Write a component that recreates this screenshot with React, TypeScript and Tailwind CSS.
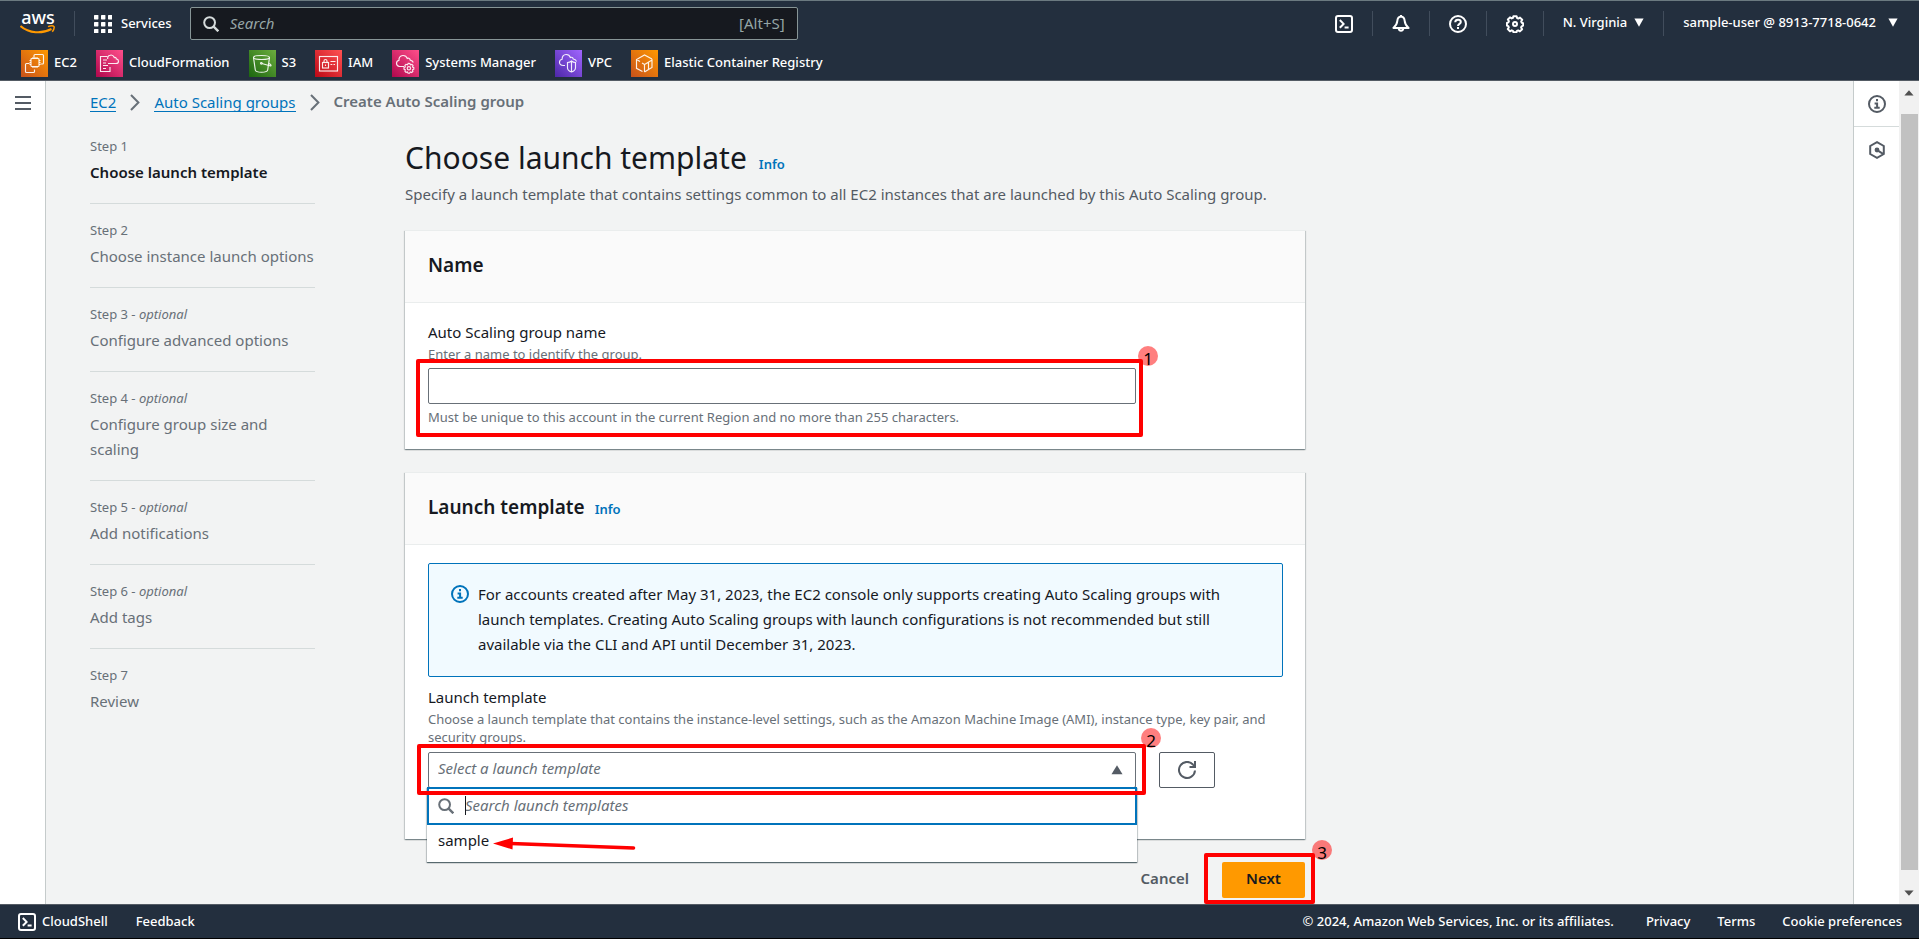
import React from "react";

type IconProps = { className?: string };

function SearchIcon({ className }: IconProps) {
  return (
    <svg viewBox="0 0 16 16" className={className} fill="none" stroke="currentColor" strokeWidth="2" aria-hidden="true">
      <circle cx="6.6" cy="6.6" r="5.4" />
      <path d="M10.4 10.4 15.3 15.3" strokeWidth="2.4" />
    </svg>
  );
}

function GridIcon() {
  const cells = [0, 7, 14];
  return (
    <svg viewBox="0 0 18 18" className="size-[18px]" fill="white" aria-hidden="true">
      {cells.map((y) => cells.map((x) => <rect key={`${x}-${y}`} x={x} y={y} width="4.4" height="4.4" rx="0.6" />))}
    </svg>
  );
}

function ShellIcon({ className }: IconProps) {
  return (
    <svg viewBox="0 0 18 18" className={className} fill="none" stroke="currentColor" strokeWidth="2" aria-hidden="true">
      <rect x="1" y="1" width="16" height="16" rx="2" />
      <path d="M4.8 5 8.6 8.900 4.8 12.800M9.600 12.600h4" />
    </svg>
  );
}

function BellIcon() {
  return (
    <svg viewBox="0 0 18 18" className="size-[18px]" fill="none" stroke="currentColor" strokeWidth="2" strokeLinejoin="round" aria-hidden="true">
      <path d="M9 1.600C6.700 1.900 5.500 3.600 5.300 6 5.100 9 3.800 10.900 1.400 12.900h15.200C14.200 10.900 12.900 9 12.700 6 12.500 3.600 11.300 1.900 9 1.600Z" />
      <path d="M6.600 13.200a2.500 3.400 0 0 0 4.800 0" />
      <path d="M9 0v2" />
    </svg>
  );
}

function HelpIcon() {
  return (
    <svg viewBox="0 0 18 18" className="size-[18px]" fill="none" stroke="currentColor" strokeWidth="2" aria-hidden="true">
      <circle cx="9" cy="9" r="8" />
      <path d="M6.200 7.200C6.300 5.500 7.500 4.700 9 4.700s2.800.9 2.800 2.300c0 1.900-2.800 1.900-2.800 4" />
      <path d="M9 12v2" />
    </svg>
  );
}

function GearIcon() {
  return (
    <svg viewBox="0 0 18 18" className="size-[18px]" fill="none" stroke="currentColor" strokeWidth="2" strokeLinejoin="round" aria-hidden="true">
      <path d="M7.400 1.200h3.200l.5 1.900 1.200.5 1.700-1 2.200 2.200-1 1.700.5 1.200 1.400.5v2.400l-1.500.7-.5 1.200 1 1.700-2.200 2.200-1.700-1-1.200.5-.5 1.300H7.400l-.5-1.400-1.200-.5-1.700 1-2.200-2.200 1-1.700-.5-1.200-1.400-.6V8l1.500-.6.5-1.200-1-1.700L4 2.400l1.700 1 1.200-.5Z" />
      <circle cx="9" cy="9" r="2" />
    </svg>
  );
}

function InfoIcon({ className }: IconProps) {
  return (
    <svg viewBox="0 0 18 18" className={className} fill="none" stroke="currentColor" strokeWidth="2" aria-hidden="true">
      <circle cx="9" cy="9" r="8" />
      <path d="M9 4v2.200M6.600 8.400h2.500v4.200M6.300 12.800h5.400" />
    </svg>
  );
}

function HexIcon() {
  return (
    <svg viewBox="0 0 18 18" className="size-[18px]" fill="none" stroke="currentColor" strokeWidth="2" aria-hidden="true">
      <path d="M9 1.200 15.800 5v8L9 16.800 2.200 13V5Z" />
      <circle cx="9" cy="9" r="2.400" fill="currentColor" stroke="none" />
      <path d="m9.500 9.400 5.600 3.400" />
    </svg>
  );
}

function RefreshIcon() {
  return (
    <svg viewBox="0 0 18 18" className="size-[18px]" fill="none" stroke="currentColor" strokeWidth="2" aria-hidden="true">
      <path d="M17 9.500A8 8 0 1 1 15 3.600L16.400 5" />
      <path d="M17 0v6h-5.500" />
    </svg>
  );
}

function Chevron() {
  return (
    <svg viewBox="0 0 10 17" className="h-[17px] w-[10px] text-[#687078]" fill="none" stroke="currentColor" strokeWidth="2" aria-hidden="true">
      <path d="m1 1 7.400 7.500L1 16" />
    </svg>
  );
}

function Caret({ className }: IconProps) {
  return (
    <svg viewBox="0 0 10 9" className={className} fill="currentColor" preserveAspectRatio="none" aria-hidden="true">
      <path d="M0.400 0.600h9.200L5 8.800Z" />
    </svg>
  );
}

const glyphs: Record<string, React.ReactNode> = {
  ec2: (
    <>
      <path d="M13 7.500V5.500a1 1 0 0 1 1-1h7.500a1 1 0 0 1 1 1V13a1 1 0 0 1-1 1h-2M8.500 13.500h-3a1 1 0 0 0-1 1v7a1 1 0 0 0 1 1h7a1 1 0 0 0 1-1v-2" />
      <rect x="10" y="8.500" width="8" height="8" rx="0.800" />
      <path d="M12 8.500V7M14 8.500V7M16 8.500V7M12 16.500V18M14 16.500V18M16 16.500V18M10 10.500H8.500M10 12.500H8.500M10 14.500H8.500M18 10.500h1.500M18 12.500h1.500M18 14.500h1.500" />
    </>
  ),
  cloudformation: (
    <>
      <path d="M11.500 6.500h-7v15h9.500v-4.500M7 10h4M7 13h3M7 15.500h5M7 18.500h3" />
      <path d="M12 13.500h8c1.400 0 2.500-.9 2.500-2.300 0-1.300-.9-2.100-2.200-2.300 0-1.500-1.300-2-2-1.400-.8-1.800-2.200-2.700-3.900-2.400-2 .3-3.100 2-2.700 3.900" />
    </>
  ),
  s3: (
    <>
      <ellipse cx="12.500" cy="7.500" rx="8" ry="2" />
      <path d="M4.500 7.500 6.300 20c.3 1.400 2.900 2.200 6.200 2.200s5.900-.8 6.200-2.200l1.800-12.500" />
      <path d="m12.800 13.500 8 2.300c1.500.4 1.700-.6.4-1.500l-1.300-.8" />
      <circle cx="12.300" cy="13.300" r="0.800" />
    </>
  ),
  iam: (
    <>
      <rect x="4.500" y="6.500" width="18" height="14.500" />
      <rect x="7.500" y="12.500" width="6" height="5.500" />
      <path d="M9 12.500v-1.500a1.500 1.500 0 0 1 3 0v1.500M10.500 14.500v1.500M15.500 11.500h5M15.500 14.500h1.800M18.500 14.500h1.500" />
    </>
  ),
  systems: (
    <>
      <path d="M12 16.500H7.500c-1.700-.2-3-1.400-3-3.200 0-1.600 1-2.700 2.500-3.100-.2-2.500 1.500-4.400 3.800-4.700 2.300-.2 3.800 1.100 4.500 3 1.300-.8 2.800.1 2.900 1.600 1.500.2 2.700 1 3.100 2.400" />
      <path d="m16.200 13.400 1.600.1.600 1.300 1.500-.4 1.100 1.100-.5 1.500 1.300.7v1.500l-1.300.6.4 1.500-1.200 1.200-1.400-.5-.7 1.200h-1.500l-.6-1.300-1.500.5-1.100-1.200.4-1.400-1.300-.7v-1.500l1.300-.7-.4-1.400 1.100-1.200 1.500.5Z" />
      <circle cx="16.900" cy="18.300" r="1.700" />
    </>
  ),
  vpc: (
    <>
      <path d="M10 15.500H8.500c-2.200-.1-4-1.200-4-3.300 0-1.600 1-2.700 2.600-3 0-2.500 1.600-4.500 4-4.700 2.200-.1 3.700 1.200 4.300 3 1.300-.7 2.600 0 2.900 1.500 1.600.3 2.900 1.100 3.200 2.500" />
      <path d="M16.500 11c1.500 1.200 2.600 1.400 4 1.500v5.200c0 2-2 3.600-4 4.300-2-.7-4-2.300-4-4.300v-5.200c1.400-.1 2.500-.3 4-1.500ZM16.500 11v11" />
    </>
  ),
  ecr: (
    <>
      <path d="M11.500 21.500 5.500 18.300V9.500L13.500 5l7.500 4M5.500 9.500l3.500 1.900M13.500 22V14.500L21 10v7.500L17.500 19.500v-7.200M13.500 14.500l-2.500-1.400M13.500 22l4-2.500" />
    </>
  ),
};

function ServiceIcon({ id, from, to }: { id: string; from: string; to: string }) {
  return (
    <svg viewBox="0 0 27 27" className="size-[27px]" aria-hidden="true">
      <defs>
        <linearGradient id={`g-${id}`} x1="0" y1="1" x2="1" y2="0">
          <stop offset="0" stopColor={from} />
          <stop offset="1" stopColor={to} />
        </linearGradient>
      </defs>
      <rect width="27" height="27" fill={`url(#g-${id})`} />
      <g fill="none" stroke="white" strokeOpacity="0.9" strokeWidth="1.15">
        {glyphs[id]}
      </g>
    </svg>
  );
}

const services = [
  { id: "ec2", name: "EC2", from: "#c8511b", to: "#ff9900" },
  { id: "cloudformation", name: "CloudFormation", from: "#b0084d", to: "#ff4f8b" },
  { id: "s3", name: "S3", from: "#1b660f", to: "#6cae3e" },
  { id: "iam", name: "IAM", from: "#bd0816", to: "#ff5252" },
  { id: "systems", name: "Systems Manager", from: "#b0084d", to: "#ff4f8b" },
  { id: "vpc", name: "VPC", from: "#4d27a8", to: "#a166ff" },
  { id: "ecr", name: "Elastic Container Registry", from: "#c8511b", to: "#ff9900" },
];

const steps = [
  { label: "Step 1", optional: false, title: "Choose launch template", active: true },
  { label: "Step 2", optional: false, title: "Choose instance launch options", active: false },
  { label: "Step 3", optional: true, title: "Configure advanced options", active: false },
  { label: "Step 4", optional: true, title: "Configure group size and scaling", active: false },
  { label: "Step 5", optional: true, title: "Add notifications", active: false },
  { label: "Step 6", optional: true, title: "Add tags", active: false },
  { label: "Step 7", optional: false, title: "Review", active: false },
];

function Separator() {
  return <span className="h-[25px] w-px bg-[#414d5c]" />;
}

function TopBar() {
  return (
    <header className="border-t border-b border-t-[#6b7a80] border-b-[#545b64] bg-[#232f3e] text-[13px] font-medium text-white">
      <div className="flex h-[45px] items-center">
        <a href="#home" aria-label="aws" className="ml-5 flex w-9 flex-col items-center pb-1">
          <span className="h-[15px] text-[18px] leading-[15px] font-medium">aws</span>
          <svg viewBox="0 0 36 9" className="h-[9px] w-9" fill="none" stroke="#ff9900" aria-hidden="true">
            <path d="M0.500 1C9 8.500 22 9 31.500 4" strokeWidth="2" />
            <path d="M28 1.600c2.500-.8 5.200-1.100 6 0 .5 1.300-.5 3.600-1.700 5.200" strokeWidth="1.500" />
          </svg>
        </a>
        <div className="ml-[18px] flex"><Separator /></div>
        <button type="button" className="ml-[19px] flex items-center gap-[9px]">
          <GridIcon />
          Services
        </button>
        <label className="ml-[18px] flex h-[33px] w-[608px] items-center rounded-[2px] border border-[#879596] bg-[#16191f] px-3">
          <SearchIcon className="size-4 text-[#d5dbdb]" />
          <input
            type="text"
            aria-label="Search"
            placeholder="Search"
            className="ml-[11px] min-w-0 flex-1 bg-transparent text-[15px] font-normal outline-none placeholder:text-[#95a5a6] placeholder:italic"
          />
          <span className="text-[15px] font-normal text-[#95a5a6]">[Alt+S]</span>
        </label>
        <div className="ml-auto flex items-center gap-[19px] pr-[21px]">
          <button type="button" aria-label="CloudShell"><ShellIcon className="size-[18px]" /></button>
          <Separator />
          <button type="button" aria-label="Notifications"><BellIcon /></button>
          <Separator />
          <button type="button" aria-label="Help"><HelpIcon /></button>
          <Separator />
          <button type="button" aria-label="Settings"><GearIcon /></button>
          <Separator />
          <button type="button" className="flex items-center gap-[7px] pb-[2px]">
            N. Virginia
            <Caret className="h-[9px] w-[10px]" />
          </button>
          <Separator />
          <button type="button" className="flex items-center gap-3 pb-[2px]">
            sample-user @ 8913-7718-0642
            <Caret className="h-[9px] w-[10px]" />
          </button>
        </div>
      </div>
      <nav className="flex h-[34px] items-center gap-[19px] pl-[21px]">
        {services.map((s) => (
          <a key={s.id} href={`#${s.id}`} className="flex items-center gap-[6px]">
            <ServiceIcon id={s.id} from={s.from} to={s.to} />
            {s.name}
          </a>
        ))}
      </nav>
    </header>
  );
}

function Steps() {
  return (
    <ol className="w-[225px] shrink-0">
      {steps.map((s) => (
        <li key={s.label} className="border-b border-[#d5dbdb] pt-4 pb-[18px] last:border-b-0">
          <p className="text-[13px] leading-5 text-[#687078]">
            {s.label}
            {s.optional && (
              <>
                {" - "}
                <em>optional</em>
              </>
            )}
          </p>
          <p className={s.active ? "mt-1 text-[15px] leading-[25px] font-semibold text-[#16191f]" : "mt-1 text-[15px] leading-[25px] text-[#687078]"}>
            {s.title}
          </p>
        </li>
      ))}
    </ol>
  );
}

function Badge({ children, className }: { children: React.ReactNode; className: string }) {
  return (
    <span className={`pointer-events-none absolute z-30 flex size-5 items-center justify-center rounded-full bg-[#ff0000]/50 pt-[6px] text-[17px] leading-5 text-black ${className}`}>
      {children}
    </span>
  );
}

function Frame({ className }: { className: string }) {
  return <span className={`pointer-events-none absolute z-20 rounded-[2px] border-4 border-[#ff0000] ${className}`} />;
}

function Card({ title, info, children }: { title: string; info?: boolean; children: React.ReactNode }) {
  return (
    <section className="border-t border-[#eaeded] bg-white shadow-[0_1px_1px_0_rgba(0,28,36,0.3),1px_1px_1px_0_rgba(0,28,36,0.15),-1px_1px_1px_0_rgba(0,28,36,0.15)]">
      <div className="flex h-[72px] items-center gap-[10px] border-b border-[#eaeded] bg-[#fafafa] px-[23px] pb-[2px]">
        <h2 className="text-[19px] font-semibold text-[#16191f]">{title}</h2>
        {info && <a href="#info" className="pt-1 text-[13px] font-semibold text-[#0073bb]">Info</a>}
      </div>
      {children}
    </section>
  );
}

function NameCard() {
  return (
    <Card title="Name">
      <div className="px-[23px] pt-[17px] pb-[23px]">
        <label htmlFor="asg-name" className="block text-[15px] leading-[25px] text-[#16191f]">Auto Scaling group name</label>
        <p className="text-[13px] leading-[18px] text-[#687078]">Enter a name to identify the group.</p>
        <div className="relative mt-[5px] w-[708px]">
          <input id="asg-name" type="text" className="block h-9 w-full rounded-[2px] border border-[#687078] px-[10px] text-[15px] outline-none" />
          <p className="mt-1 text-[13px] leading-[18px] text-[#687078]">
            Must be unique to this account in the current Region and no more than 255 characters.
          </p>
          <Frame className="-top-[9px] -right-[7px] -bottom-[11px] -left-3" />
          <Badge className="-top-[22px] -right-[22px]">1</Badge>
        </div>
      </div>
    </Card>
  );
}

function TemplateCard() {
  return (
    <Card title="Launch template" info>
      <div className="pt-[18px] pr-[22px] pb-[51px] pl-[23px]">
        <div role="note" className="flex gap-[9px] rounded-[2px] border border-[#0073bb] bg-[#f1faff] px-[22px] pt-[18px] pb-[19px] text-[15px] leading-[25px] text-[#16191f]">
          <InfoIcon className="mt-[3px] size-[18px] shrink-0 text-[#0073bb]" />
          <p>
            For accounts created after May 31, 2023, the EC2 console only supports creating Auto Scaling groups with
            launch templates. Creating Auto Scaling groups with launch configurations is not recommended but still
            available via the CLI and API until December 31, 2023.
          </p>
        </div>
        <label htmlFor="template" className="mt-2 block text-[15px] leading-[25px] text-[#16191f]">Launch template</label>
        <p className="text-[13px] leading-[18px] text-[#687078]">
          Choose a launch template that contains the instance-level settings, such as the Amazon Machine Image (AMI),
          instance type, key pair, and security groups.
        </p>
        <div className="mt-[6px] flex gap-[23px]">
          <div className="relative w-[708px]">
            <select
              id="template"
              defaultValue=""
              className="block h-9 w-full appearance-none rounded-[2px] border border-[#687078] bg-white px-[9px] pb-[3px] text-[15px] text-[#687078] italic outline-none"
            >
              <option value="">Select a launch template</option>
              <option value="sample">sample</option>
            </select>
            <Caret className="pointer-events-none absolute top-[13px] right-[13px] h-[10px] w-3 rotate-180 text-[#545b64]" />
            <div className="absolute top-[35px] -right-px -left-px z-10 bg-white shadow-[0_1px_1px_0_rgba(0,28,36,0.5),1px_1px_1px_0_rgba(0,28,36,0.15),-1px_1px_1px_0_rgba(0,28,36,0.15)]">
              <label className="relative flex h-[38px] items-center border-2 border-[#0073bb] px-[9px]">
                <SearchIcon className="size-4 text-[#687078]" />
                <span className="absolute top-[7px] left-9 h-[19px] w-px bg-[#16191f]" />
                <input
                  type="text"
                  aria-label="Search launch templates"
                  placeholder="Search launch templates"
                  className="ml-[11px] min-w-0 flex-1 pb-[2px] text-[15px] outline-none placeholder:text-[#687078] placeholder:italic"
                />
              </label>
              <ul>
                <li className="relative px-[11px] pt-[3px] pb-[9px] text-[15px] leading-[25px] text-[#16191f]">
                  sample
                  <svg viewBox="0 0 144 14" className="pointer-events-none absolute top-3 left-[66px] h-[14px] w-36" aria-hidden="true">
                    <path d="M18 6.500 140.500 11" stroke="#ff0000" strokeWidth="3.600" strokeLinecap="round" />
                    <path d="M0 6.500 20 0.500 19.500 12.500Z" fill="#ff0000" />
                  </svg>
                </li>
              </ul>
            </div>
            <Frame className="-top-2 -right-[10px] -bottom-[7px] -left-[11px]" />
            <Badge className="-top-6 -right-[25px]">2</Badge>
          </div>
          <button type="button" aria-label="Refresh" className="flex h-9 w-14 items-center justify-center rounded-[2px] border border-[#545b64] text-[#545b64]">
            <RefreshIcon />
          </button>
        </div>
      </div>
    </Card>
  );
}

function RightRail() {
  return (
    <aside className="flex w-[46px] shrink-0 flex-col items-center border-l border-[#c5cbcb] bg-white text-[#545b64]">
      <button type="button" aria-label="Info panel" className="flex h-[46px] w-full items-center justify-center border-b border-[#d5dbdb]">
        <InfoIcon className="size-[18px]" />
      </button>
      <button type="button" aria-label="Diagnostics" className="flex h-[46px] w-full items-center justify-center">
        <HexIcon />
      </button>
    </aside>
  );
}

function ScrollTrack() {
  return (
    <div className="flex w-5 shrink-0 flex-col items-center bg-[#f1f1f1] text-[#505050]" aria-hidden="true">
      <span className="flex h-[33px] items-center pb-[10px]">
        <Caret className="h-[6px] w-[10px] rotate-180" />
      </span>
      <span className="w-[17px] flex-1 bg-[#c1c1c1]" />
      <span className="flex h-[34px] items-center pt-3">
        <Caret className="h-[6px] w-[10px]" />
      </span>
    </div>
  );
}

export default function App() {
  return (
    <div className="flex min-h-screen flex-col bg-[#f2f3f3] font-['Noto_Sans',sans-serif] text-[15px]">
      <TopBar />
      <div className="flex flex-1">
        <aside className="w-[46px] shrink-0 border-r border-[#c5cbcb] bg-white">
          <button type="button" aria-label="Open navigation" className="mt-[15px] ml-[15px] flex h-[14px] w-4 flex-col justify-between">
            <span className="h-[2px] w-full bg-[#545b64]" />
            <span className="h-[2px] w-full bg-[#545b64]" />
            <span className="h-[2px] w-full bg-[#545b64]" />
          </button>
        </aside>
        <main className="min-w-0 flex-1 px-11 pb-[6px]">
          <nav aria-label="Breadcrumb" className="flex h-[39px] items-center gap-[14px] pt-[4px] text-[15px]">
            <a href="#ec2" className="border-b border-[#0073bb] leading-[18px] text-[#0073bb]">EC2</a>
            <Chevron />
            <a href="#groups" className="border-b border-[#0073bb] leading-[18px] text-[#0073bb]">Auto Scaling groups</a>
            <Chevron />
            <span className="pb-[2px] font-semibold text-[#687078]">Create Auto Scaling group</span>
          </nav>
          <div className="flex gap-[90px]">
            <Steps />
            <div className="w-[900px]">
              <div className="flex items-baseline gap-3 pt-[14px]">
                <h1 className="text-[30px] leading-[48px] text-[#16191f]">Choose launch template</h1>
                <a href="#info" className="text-[13px] font-semibold text-[#0073bb]">Info</a>
              </div>
              <p className="text-[15px] leading-[25px] text-[#545b64]">
                Specify a launch template that contains settings common to all EC2 instances that are launched by this Auto Scaling group.
              </p>
              <div className="mt-[23px] flex flex-col gap-[23px]">
                <NameCard />
                <TemplateCard />
              </div>
              <div className="mt-[23px] flex items-center justify-end gap-[33px] text-[15px] font-semibold">
                <button type="button" className="pb-[3px] text-[#545b64]">Cancel</button>
                <div className="relative">
                  <button type="button" className="h-9 w-[83px] rounded-[2px] bg-[#ff9900] pb-[3px] text-[#16191f]">Next</button>
                  <Frame className="-top-[9px] -right-[10px] -bottom-[6px] -left-[18px]" />
                  <Badge className="-top-[22px] -right-[27px] font-normal">3</Badge>
                </div>
              </div>
            </div>
          </div>
        </main>
        <RightRail />
        <ScrollTrack />
      </div>
      <footer className="flex h-[35px] items-center border-t border-b border-t-[#545b64] border-b-black bg-[#232f3e] pr-[17px] pl-[18px] text-[13px] font-medium text-white">
        <button type="button" className="flex items-center gap-[6px]">
          <ShellIcon className="size-[18px]" />
          CloudShell
        </button>
        <a href="#feedback" className="ml-7">Feedback</a>
        <span className="ml-auto">© 2024, Amazon Web Services, Inc. or its affiliates.</span>
        <a href="#privacy" className="ml-8">Privacy</a>
        <a href="#terms" className="ml-[27px]">Terms</a>
        <a href="#cookies" className="ml-[27px]">Cookie preferences</a>
      </footer>
    </div>
  );
}
